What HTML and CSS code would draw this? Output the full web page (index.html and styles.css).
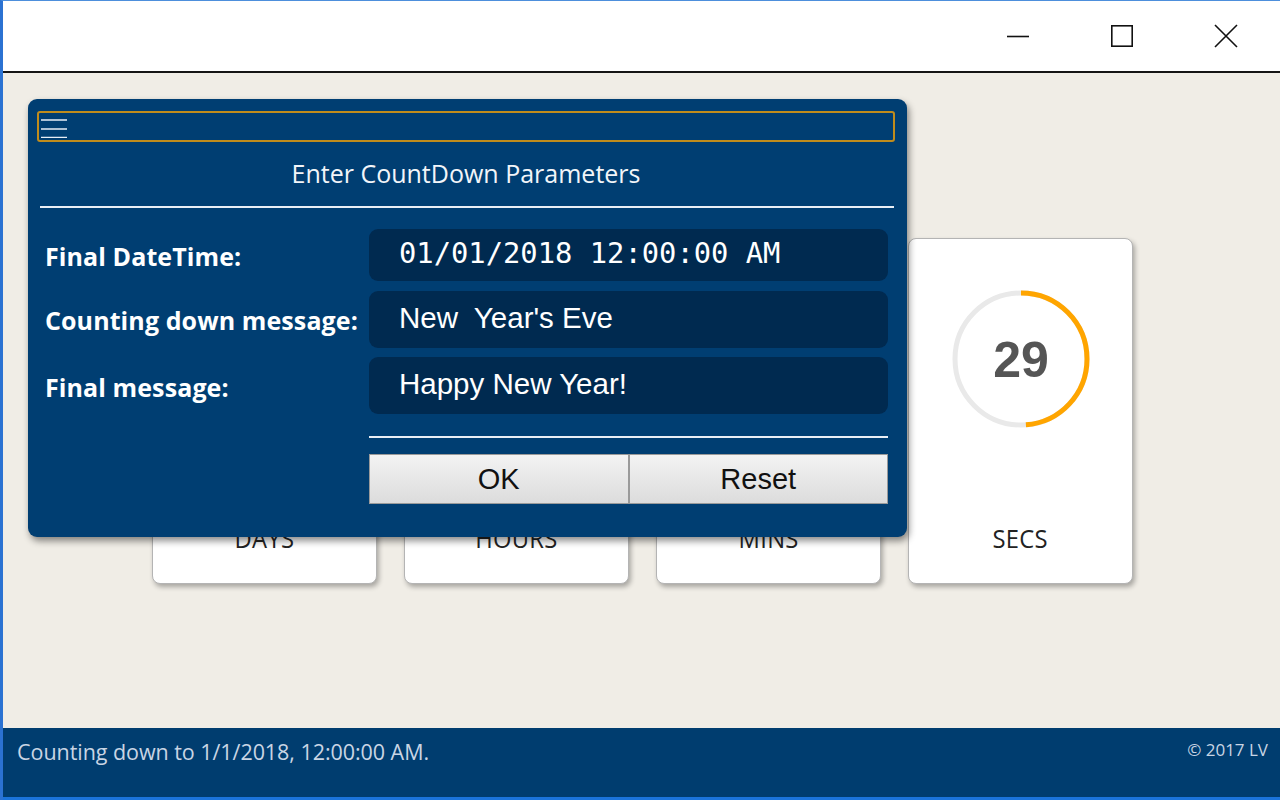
FILE: index.html
```html
<!DOCTYPE html>
<html lang="en">
<head>
<meta charset="utf-8">
<title>CountDown</title>
<link rel="stylesheet" href="styles.css">
</head>
<body>
<div class="window">
  <header class="titlebar">
    <button class="tb-btn" aria-label="Minimize">
      <svg width="24" height="24" viewBox="0 0 24 24"><line x1="1" y1="12.5" x2="23" y2="12.5" stroke="#111" stroke-width="1.6"/></svg>
    </button>
    <button class="tb-btn" aria-label="Maximize">
      <svg width="24" height="24" viewBox="0 0 24 24"><rect x="1.8" y="1.8" width="20.4" height="20.4" fill="none" stroke="#111" stroke-width="1.6"/></svg>
    </button>
    <button class="tb-btn" aria-label="Close">
      <svg width="24" height="24" viewBox="0 0 24 24"><path d="M1 1 L23 23 M23 1 L1 23" stroke="#111" stroke-width="1.6" fill="none"/></svg>
    </button>
  </header>

  <main class="main">
    <div class="cards">
      <div class="card">
        <svg class="ring" width="146" height="146" viewBox="0 0 146 146">
          <circle cx="73" cy="73" r="66" fill="none" stroke="#e9e9e9" stroke-width="5"/>
        </svg>
        <div class="card-label">DAYS</div>
      </div>
      <div class="card">
        <svg class="ring" width="146" height="146" viewBox="0 0 146 146">
          <circle cx="73" cy="73" r="66" fill="none" stroke="#e9e9e9" stroke-width="5"/>
        </svg>
        <div class="card-label">HOURS</div>
      </div>
      <div class="card">
        <svg class="ring" width="146" height="146" viewBox="0 0 146 146">
          <circle cx="73" cy="73" r="66" fill="none" stroke="#e9e9e9" stroke-width="5"/>
        </svg>
        <div class="card-label">MINS</div>
      </div>
      <div class="card">
        <svg class="ring" width="146" height="146" viewBox="0 0 146 146">
          <circle cx="73" cy="73" r="66" fill="none" stroke="#e9e9e9" stroke-width="5"/>
          <circle cx="73" cy="73" r="66" fill="none" stroke="#ffa500" stroke-width="5" stroke-dasharray="202 415" transform="rotate(-90 73 73)"/>
          <text x="73" y="91" text-anchor="middle" class="ring-num">29</text>
        </svg>
        <div class="card-label">SECS</div>
      </div>
    </div>
  </main>

  <footer class="footer">
    <span class="status">Counting down to 1/1/2018, 12:00:00 AM.</span>
    <span class="copy">© 2017 LV</span>
  </footer>

  <section class="dialog" role="dialog" aria-label="Enter CountDown Parameters">
    <div class="dlg-bar">
      <svg width="28" height="22" viewBox="0 0 28 22"><path d="M1 4 H27 M1 13 H27 M1 21.5 H27" stroke="#e8eef6" stroke-width="1.6" fill="none"/></svg>
    </div>
    <div class="dlg-title">Enter CountDown Parameters</div>
    <div class="dlg-rule"></div>
    <div class="form">
      <label class="lbl">Final DateTime:</label>
      <div class="field field-mono">01/01/2018 12:00:00 AM</div>
      <label class="lbl">Counting down message:</label>
      <div class="field">New&nbsp; Year's Eve</div>
      <label class="lbl">Final message:</label>
      <div class="field">Happy New Year!</div>
    </div>
    <div class="actions">
      <div class="act-rule"></div>
      <div class="btns">
        <button class="btn">OK</button>
        <button class="btn">Reset</button>
      </div>
    </div>
  </section>
</div>
</body>
</html>
```

FILE: styles.css
```css
* { box-sizing: border-box; }
html, body { margin: 0; padding: 0; }
body { width: 1280px; height: 800px; overflow: hidden; font-family: "Open Sans", "Noto Sans", sans-serif; }

.window {
  position: relative;
  width: 1280px;
  height: 800px;
  display: flex;
  flex-direction: column;
  border-left: 3px solid #2b72d2;
  border-top: 1px solid #4d8fdc;
  background: #f0ede6;
}

.titlebar {
  height: 72px;
  flex: none;
  background: #ffffff;
  border-bottom: 2px solid #151515;
  display: flex;
  justify-content: flex-end;
  align-items: center;
  padding-right: 2px;
}
.tb-btn {
  width: 104px;
  height: 60px;
  border: 0;
  background: transparent;
  padding: 0;
  display: flex;
  align-items: center;
  justify-content: center;
}
.tb-btn svg { display: block; }

.main {
  flex: 1;
  background: #f0ede6;
}
.cards {
  display: flex;
  gap: 27px;
  padding: 165px 0 0 149px;
}
.card {
  width: 225px;
  height: 346px;
  background: #ffffff;
  border: 1px solid #b4b4b4;
  border-radius: 8px;
  box-shadow: 2px 3px 5px rgba(0, 0, 0, 0.3);
  display: flex;
  flex-direction: column;
  align-items: center;
  padding-top: 47px;
}
.ring { display: block; }
.ring-num {
  font-family: "Liberation Sans", Arial, sans-serif;
  font-weight: 700;
  font-size: 50px;
  fill: #555555;
}
.card-label {
  margin-top: 91px;
  font-size: 25px;
  line-height: 30px;
  color: #222;
  letter-spacing: 0.3px;
  transform: scaleX(0.95);
}

.footer {
  height: 72px;
  flex: none;
  background: #003d6f;
  border-bottom: 3px solid #1b74da;
  display: flex;
  justify-content: space-between;
  align-items: flex-start;
  padding: 9px 12px 0 14px;
}
.status {
  color: #c9d5e4;
  font-size: 21.5px;
  line-height: 30px;
  letter-spacing: -0.05px;
}
.copy {
  color: #c9d5e4;
  font-size: 17px;
  line-height: 26px;
}

.dialog {
  position: absolute;
  left: 25px;
  top: 98px;
  width: 879px;
  height: 438px;
  background: #003e72;
  border-radius: 9px;
  box-shadow: 2px 4px 7px rgba(0, 0, 0, 0.45);
  padding: 12px 12px 0 9px;
  color: #fff;
}
.dlg-bar {
  height: 31px;
  border: 2px solid #c08c1c;
  border-radius: 3px;
  padding: 0 0 0 1px;
  display: flex;
  align-items: center;
}
.dlg-bar svg { display: block; margin-top: 1px; }
.dlg-title {
  margin-top: 11px;
  text-align: center;
  font-size: 25px;
  line-height: 40px;
  letter-spacing: 0;
  color: #f2f5f9;
}
.dlg-rule {
  margin: 13px 1px 0 3px;
  height: 2px;
  background: #e9eef5;
}
.form {
  margin: 21px 0 0 8px;
  display: grid;
  grid-template-columns: 324px 519px;
  grid-template-rows: 52px 57px 57px;
  row-gap: 9.5px;
  align-items: center;
}
.lbl {
  font-weight: 700;
  font-size: 25px;
  letter-spacing: 0.1px;
  color: #ffffff;
  padding-top: 2px;
  white-space: nowrap;
}
.field {
  height: 100%;
  background: #002a50;
  border-radius: 9px;
  padding-left: 30px;
  display: flex;
  align-items: center;
  font-family: "Liberation Sans", Arial, sans-serif;
  font-size: 29.5px;
  color: #ffffff;
  white-space: pre;
  padding-bottom: 3px;
}
.field-mono {
  font-family: "DejaVu Sans Mono", "Liberation Mono", monospace;
  font-size: 28.8px;
  padding-bottom: 5px;
}
.actions {
  margin: 22px 0 0 332px;
  width: 519px;
}
.act-rule {
  height: 2px;
  background: #e9eef5;
}
.btns {
  margin-top: 16px;
  display: flex;
}
.btn {
  flex: 1;
  height: 50px;
  border: 1px solid #9a9a9a;
  background: linear-gradient(#f3f3f3, #dcdcdc);
  font-family: "Liberation Sans", Arial, sans-serif;
  font-size: 29px;
  color: #111;
  padding: 0;
}
```
